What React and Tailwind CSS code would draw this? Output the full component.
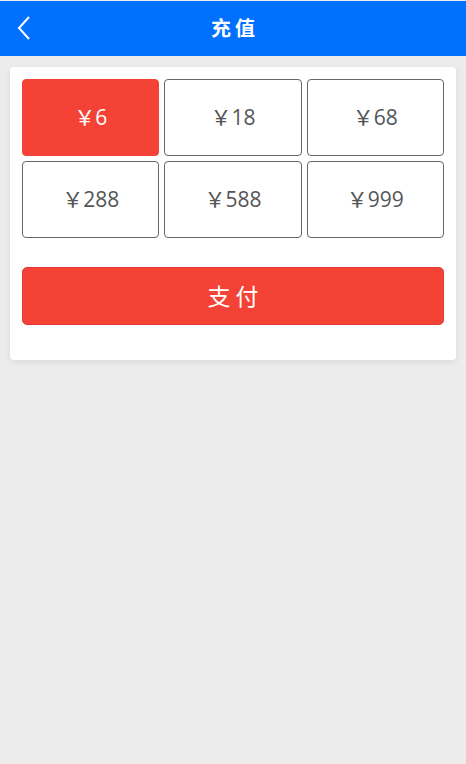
import React, { useState } from 'react';

const amounts = [6, 18, 68, 288, 588, 999];

const App = () => {
    const [selected, setSelected] = useState(0);

    return (
        <div className="min-h-[764px] bg-[#ececec] pt-px" style={{ fontFamily: '"Open Sans", "Noto Sans CJK SC", sans-serif' }}>
            {/* Header */}
            <div className="relative flex h-[55px] items-center justify-center bg-[#0070ff] text-white">
                <button className="absolute left-[12px] top-[10px] p-1">
                    <svg width="16" height="26" viewBox="0 0 16 26" fill="none" stroke="white" strokeWidth="2">
                        <path d="M13 2 L3 13 L13 24" />
                    </svg>
                </button>
                <h1 className="text-[20px] font-bold tracking-[4px] pl-[4px]">充值</h1>
            </div>

            {/* Card */}
            <div className="mx-[10px] mt-[11px] rounded-[4px] bg-white px-[12px] pt-[12px] pb-[35px] shadow-[0_2px_6px_rgba(0,0,0,0.08)]">
                <div className="grid grid-cols-3 gap-[5px]">
                    {amounts.map((amount, index) => (
                        <button
                            key={amount}
                            onClick={() => setSelected(index)}
                            className={
                                index === selected
                                    ? 'flex h-[77px] items-center justify-center rounded-[4px] border border-[#f44336] bg-[#f44336] text-[21px] text-white'
                                    : 'flex h-[77px] items-center justify-center rounded-[4px] border border-[#666666] bg-white text-[21px] text-[#555555]'
                            }
                        >
                            ￥{amount}
                        </button>
                    ))}
                </div>

                <button className="mt-[29px] flex h-[58px] w-full items-center justify-center rounded-[5px] border border-[#e33b2f] bg-[#f44336] text-[23px] tracking-[5px] pl-[5px] text-white">
                    支付
                </button>
            </div>
        </div>
    );
};

export default App;
